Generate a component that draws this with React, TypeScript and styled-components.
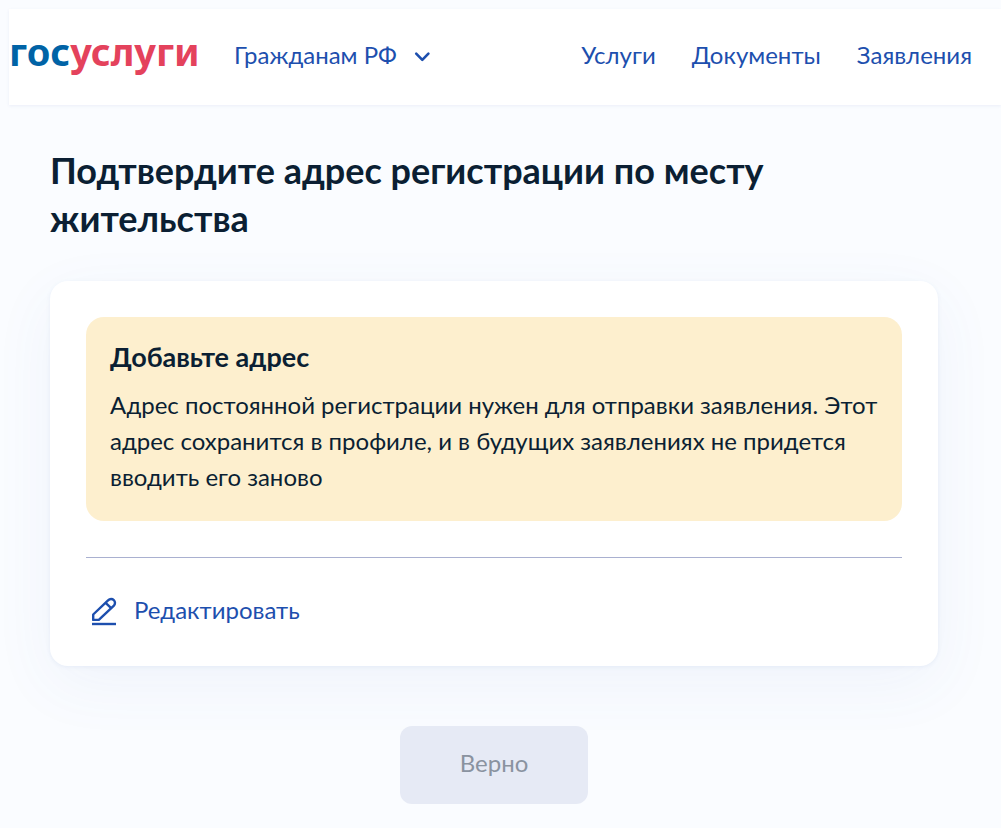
import React from 'react';
import styled, { createGlobalStyle } from 'styled-components';

const GlobalStyle = createGlobalStyle`
  *, *::before, *::after { box-sizing: border-box; }
  body {
    margin: 0;
    background: #fafcff;
    color: #0b1f33;
    font-family: Lato, "Open Sans", sans-serif;
    font-size: 24px;
    line-height: 36px;
  }
`;

const Page = styled.div`
  padding: 9px 0 24px 9px;
`;

const Header = styled.header`
  display: flex;
  align-items: center;
  height: 96px;
  padding: 0 29px 4px 0;
  background: #fff;
  box-shadow: 0 1px 3px rgba(60, 80, 160, 0.08);
`;

const Logo = styled.a`
  width: 189px;
  margin-right: 36px;
  padding-bottom: 8px;
  color: #0063a6;
  font-family: "Noto Sans", sans-serif;
  font-size: 38px;
  font-weight: 700;
  line-height: 48px;
  text-decoration: none;
  white-space: nowrap;
`;

const LogoAccent = styled.span`
  color: #e4425c;
`;

const AudienceButton = styled.button`
  display: flex;
  align-items: center;
  gap: 16px;
  padding: 0;
  border: 0;
  background: none;
  color: #1d4fae;
  font: inherit;
  white-space: nowrap;
  cursor: pointer;
`;

const Nav = styled.nav`
  display: flex;
  gap: 36px;
  margin-left: auto;
`;

const NavLink = styled.a`
  color: #1d4fae;
  text-decoration: none;
`;

const Main = styled.main`
  display: flex;
  flex-direction: column;
  padding: 41px 63px 0 41px;
`;

const Title = styled.h1`
  max-width: 800px;
  margin: 0 0 39px;
  font-size: 36px;
  font-weight: 700;
  line-height: 48px;
`;

const Card = styled.section`
  padding: 36px 36px 38px;
  border-radius: 18px;
  background: #fff;
  box-shadow: 0 18px 64px rgba(70, 100, 180, 0.06), 0 1px 4px rgba(70, 100, 180, 0.08);
`;

const Notice = styled.div`
  padding: 22px 24px 26px;
  border-radius: 18px;
  background: #fdefce;
`;

const NoticeTitle = styled.h2`
  margin: 0 0 12px;
  font-size: 27px;
  font-weight: 700;
  line-height: 36px;
`;

const NoticeText = styled.p`
  margin: 0;
`;

const Divider = styled.hr`
  height: 1px;
  margin: 36px 0 34px;
  border: 0;
  background: #a9b0d0;
`;

const EditButton = styled.button`
  display: flex;
  align-items: center;
  gap: 12px;
  padding: 0;
  border: 0;
  background: none;
  color: #1d4fae;
  font: inherit;
  cursor: pointer;
`;

const ConfirmButton = styled.button`
  align-self: center;
  margin-top: 60px;
  padding: 19px 60px 23px;
  border: 0;
  border-radius: 12px;
  background: #e6eaf5;
  color: #8a93a0;
  font: inherit;
`;

const ChevronIcon = () => (
  <svg width="18" height="18" viewBox="0 0 18 18" fill="none" stroke="#1d4fae" strokeWidth="2.6" strokeLinecap="round" strokeLinejoin="round" aria-hidden="true">
    <path d="M3.2 7.6 9.3 13.8 15.4 7.6" />
  </svg>
);

const PencilIcon = () => (
  <svg width="36" height="36" viewBox="0 0 36 36" fill="none" stroke="#1d4fae" strokeWidth="2.4" strokeLinejoin="round" aria-hidden="true">
    <path d="M7.2 27.9v-5.4L22.3 8.2a3.8 3.8 0 0 1 5.6 5.4L12.8 27.9Z" />
    <path d="m19.6 10.8 5.6 5.4" />
    <path d="M6 32h24" />
  </svg>
);

export default function App() {
  return (
    <Page>
      <GlobalStyle />
      <Header>
        <Logo href="#">гос<LogoAccent>услуги</LogoAccent></Logo>
        <AudienceButton type="button">
          Гражданам РФ
          <ChevronIcon />
        </AudienceButton>
        <Nav>
          <NavLink href="#">Услуги</NavLink>
          <NavLink href="#">Документы</NavLink>
          <NavLink href="#">Заявления</NavLink>
        </Nav>
      </Header>
      <Main>
        <Title>Подтвердите адрес регистрации по месту жительства</Title>
        <Card>
          <Notice>
            <NoticeTitle>Добавьте адрес</NoticeTitle>
            <NoticeText>
              Адрес постоянной регистрации нужен для отправки заявления. Этот адрес сохранится в
              профиле, и в будущих заявлениях не придется вводить его заново
            </NoticeText>
          </Notice>
          <Divider />
          <EditButton type="button">
            <PencilIcon />
            Редактировать
          </EditButton>
        </Card>
        <ConfirmButton type="button" disabled>Верно</ConfirmButton>
      </Main>
    </Page>
  );
}
